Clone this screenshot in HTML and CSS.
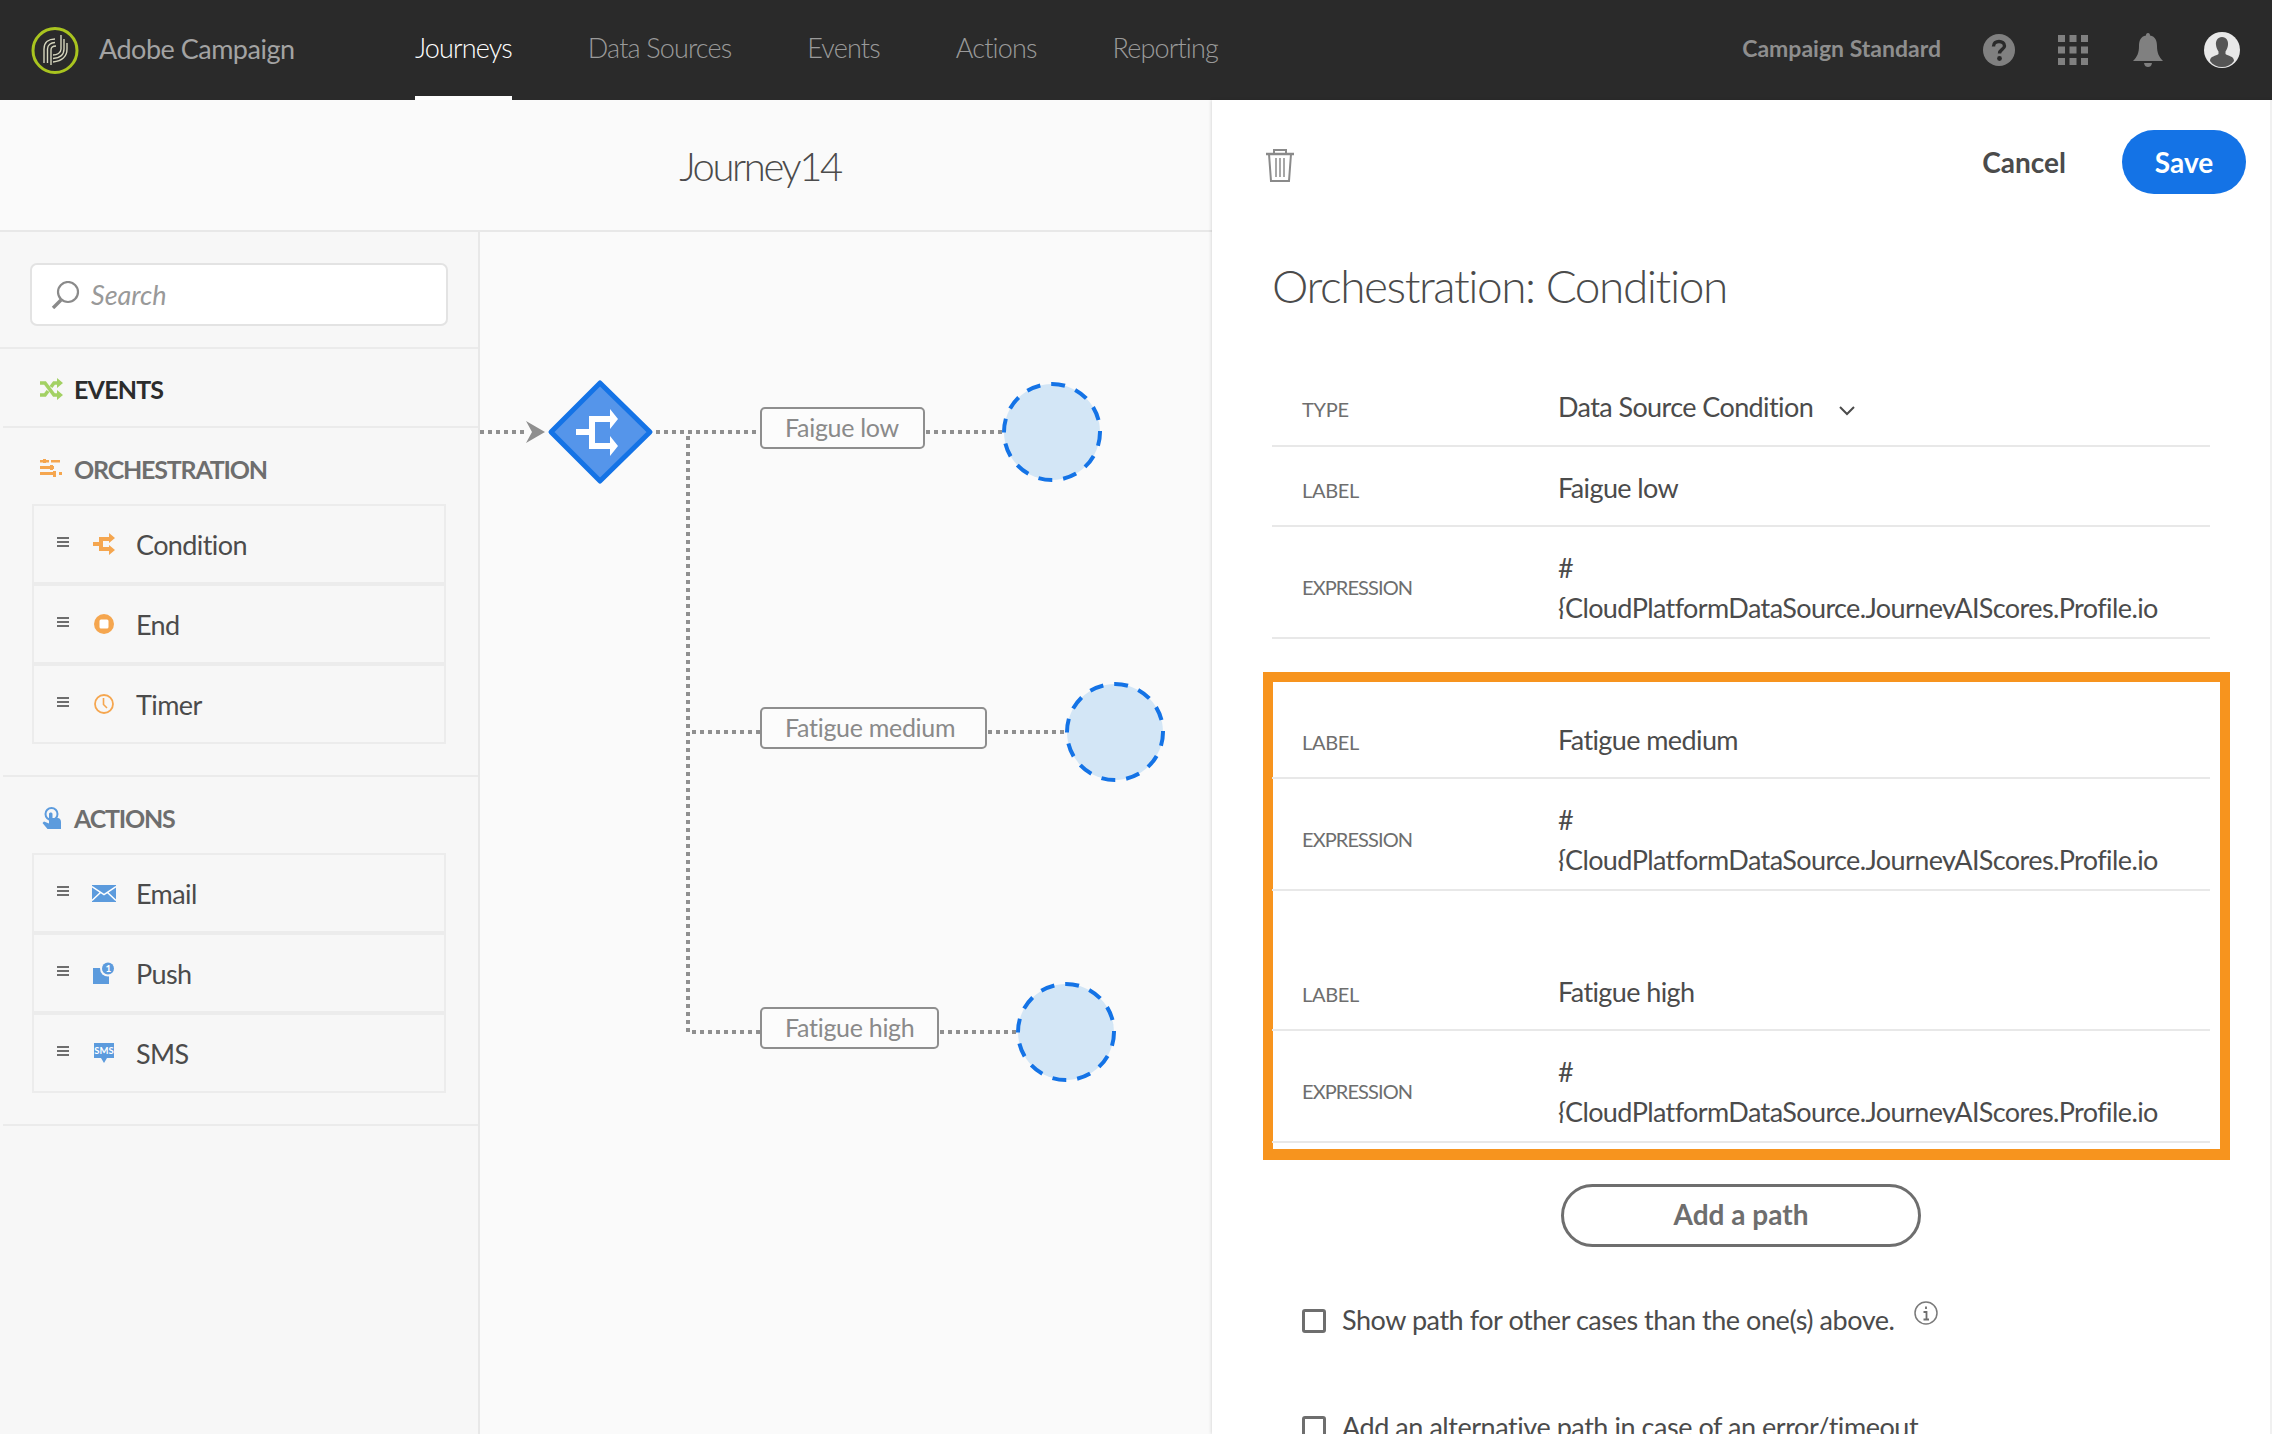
FILE: index.html
```html
<!DOCTYPE html>
<html lang="en">
<head>
  <meta charset="UTF-8">
  <title>Adobe Campaign - Journey14</title>
  <link rel="stylesheet" href="styles.css">
</head>
<body>
<svg class="defs" width="0" height="0">
  <symbol id="drag" viewBox="0 0 12 10"><path d="M0 1h12M0 5h12M0 9h12" stroke="#6e6e6e" stroke-width="2"/></symbol>
</svg>

<header class="topbar">
  <div class="brand">
    <svg class="logo" width="50" height="50" viewBox="30 22 50 50" fill="none">
      <circle cx="56" cy="47.5" r="22" stroke="#a9c41f" stroke-width="3"/>
      <path d="M45 60V46C45 39 50 36 56 36M48.5 60V46C48.5 42 52 39.5 56 39.5M52 62V47C52 44 54 43 57 43M62 32V46C62 50 58 52 54 52M65 36V46C65 52 60 55 54 55.5M68 40V46C68 54 62 58 54 59" stroke="#d5d5bd" stroke-width="1.4"/>
    </svg>
    <span class="brand-name">Adobe Campaign</span>
  </div>
  <nav class="nav">
    <a class="nav-item active">Journeys</a>
    <a class="nav-item">Data Sources</a>
    <a class="nav-item">Events</a>
    <a class="nav-item">Actions</a>
    <a class="nav-item">Reporting</a>
  </nav>
  <div class="top-right">
    <span class="org">Campaign Standard</span>
    <svg class="top-icon help" width="32" height="32" viewBox="0 0 32 32">
      <circle cx="16" cy="16" r="16" fill="#808080"/>
      <path d="M10.5 12.5C10.5 9 13 7.5 16 7.5S21.5 9.2 21.5 12C21.5 15.5 16.5 15.5 16.5 19.5" fill="none" stroke="#2a2a2a" stroke-width="3.4"/>
      <circle cx="16.5" cy="24.5" r="2.4" fill="#2a2a2a"/>
    </svg>
    <svg class="top-icon apps" width="30" height="30" viewBox="0 0 30 30" fill="#808080">
      <rect width="7" height="7"/><rect x="11.5" width="7" height="7"/><rect x="23" width="7" height="7"/>
      <rect y="11.5" width="7" height="7"/><rect x="11.5" y="11.5" width="7" height="7"/><rect x="23" y="11.5" width="7" height="7"/>
      <rect y="23" width="7" height="7"/><rect x="11.5" y="23" width="7" height="7"/><rect x="23" y="23" width="7" height="7"/>
    </svg>
    <svg class="top-icon" width="30" height="34" viewBox="0 0 30 34" fill="#808080">
      <path d="M15 0C16.5 0 17 1 17 2.500C22.500 3.500 24 8 24 13C24 20 26 24 30 28H0C4 24 6 20 6 13C6 8 7.500 3.500 13 2.500C13 1 13.500 0 15 0Z"/>
      <path d="M11 30H19C18.500 33 16.800 34 15 34S11.500 33 11 30Z"/>
    </svg>
    <svg class="top-icon" width="36" height="36" viewBox="0 0 36 36">
      <circle cx="18" cy="18" r="18" fill="#e8e8e8"/>
      <path d="M18 5C22.500 5 24.500 9 24 13C23.700 16 22.500 18 21.500 19.500V22C24 24 30 24 30 29C27 33 23 35 18 35S9 33 6 29C6 24 12 24 14.500 22V19.500C13.500 18 12.300 16 12 13C11.500 9 13.500 5 18 5Z" fill="#555"/>
    </svg>
  </div>
</header>

<main class="workspace">
  <section class="editor">
    <div class="journey-title">Journey14</div>
    <div class="editor-body">
      <aside class="sidebar">
        <div class="side-search">
          <div class="search-box">
            <svg width="29" height="28" viewBox="0 0 29 28" fill="none" stroke="#8a8a8a">
              <circle cx="17" cy="11" r="10" stroke-width="2.200"/>
              <path d="M10 19L2 27" stroke-width="3.400"/>
            </svg>
            <span>Search</span>
          </div>
        </div>

        <div class="side-section first">
          <div class="side-head dark">
            <svg width="23" height="22" viewBox="0 0 23 22" fill="none">
              <path d="M0 5H5L14 17H18M0 17H5L8 13M11 9L14 5H18" stroke="#a3d164" stroke-width="3.600"/>
              <path d="M17 0L23 5L17 10ZM17 12L23 17L17 22Z" fill="#a3d164"/>
            </svg>
            EVENTS
          </div>
        </div>

        <div class="side-section">
          <div class="side-head">
            <svg width="23" height="20" viewBox="0 0 23 20" fill="#f5a64f">
              <rect x="3" width="3" height="4"/><rect x="0" y="1" width="9" height="2.500"/><rect x="11" y="1" width="9" height="2.500"/>
              <rect x="0" y="7" width="14" height="3"/><rect x="10" y="6" width="3" height="5"/>
              <rect x="0" y="13" width="13" height="3"/><rect x="13" y="12" width="3" height="6"/><rect x="19" y="13" width="3" height="3"/>
            </svg>
            ORCHESTRATION
          </div>
          <div class="item">
            <svg class="drag" width="12" height="10"><use href="#drag"/></svg>
            <span class="item-icon">
              <svg width="24" height="24" viewBox="0 0 24 24" fill="#f5a64f">
                <rect x="1" y="10" width="8" height="4"/>
                <path d="M7 5H17V1L23 6L17 11V9H11V15H17V13L23 18L17 23V19H7Z"/>
              </svg>
            </span>
            <span class="item-text">Condition</span>
          </div>
          <div class="item">
            <svg class="drag" width="12" height="10"><use href="#drag"/></svg>
            <span class="item-icon">
              <svg width="20" height="20" viewBox="0 0 20 20">
                <circle cx="10" cy="10" r="10" fill="#f5a64f"/>
                <rect x="5.500" y="5.500" width="9" height="9" rx="1.500" fill="#fff"/>
              </svg>
            </span>
            <span class="item-text">End</span>
          </div>
          <div class="item">
            <svg class="drag" width="12" height="10"><use href="#drag"/></svg>
            <span class="item-icon">
              <svg width="20" height="20" viewBox="0 0 20 20" fill="none" stroke="#f5a64f">
                <circle cx="10" cy="10" r="9" stroke-width="1.800"/>
                <path d="M9.500 4V10.500L13 14" stroke-width="1.600"/>
              </svg>
            </span>
            <span class="item-text">Timer</span>
          </div>
        </div>

        <div class="side-section">
          <div class="side-head">
            <svg width="23" height="22" viewBox="0 0 20 22">
              <circle cx="10" cy="7" r="6" fill="none" stroke="#5c9bdd" stroke-width="2"/>
              <path d="M7.500 7C7.500 5 11 5 11 7V11H16C18.500 11 19.500 13 19.500 15V22H6L1 16L2.500 14.500L7.500 16.500Z" fill="#5c9bdd"/>
            </svg>
            ACTIONS
          </div>
          <div class="item">
            <svg class="drag" width="12" height="10"><use href="#drag"/></svg>
            <span class="item-icon">
              <svg width="24" height="17" viewBox="0 0 24 17">
                <rect width="24" height="17" fill="#5c9bdd"/>
                <path d="M0 1.500L12 9.500L24 1.500M0 15.500L8.500 7.500M24 15.500L15.500 7.500" fill="none" stroke="#fff" stroke-width="1.500"/>
              </svg>
            </span>
            <span class="item-text">Email</span>
          </div>
          <div class="item">
            <svg class="drag" width="12" height="10"><use href="#drag"/></svg>
            <span class="item-icon">
              <svg width="24" height="22" viewBox="0 0 24 22">
                <rect x="1" y="6" width="16" height="16" fill="#5c9bdd"/>
                <circle cx="16" cy="6.500" r="8" fill="#f7f7f7"/>
                <circle cx="16" cy="6.500" r="6" fill="#5c9bdd"/>
                <text x="16" y="10" class="tiny-num">1</text>
              </svg>
            </span>
            <span class="item-text">Push</span>
          </div>
          <div class="item">
            <svg class="drag" width="12" height="10"><use href="#drag"/></svg>
            <span class="item-icon">
              <svg width="20" height="20" viewBox="0 0 20 20">
                <path d="M0 0H20V15H13L10 20L7 15H0Z" fill="#5c9bdd"/>
                <text x="10" y="11" class="tiny-sms">SMS</text>
              </svg>
            </span>
            <span class="item-text">SMS</span>
          </div>
        </div>
      </aside>

      <div class="canvas">
        <svg class="wires" width="732" height="1202" viewBox="0 0 732 1202" fill="none">
          <g stroke="#8f8f8f" stroke-width="4" stroke-dasharray="4 4">
            <path d="M0 200H47"/>
            <path d="M176 200H281"/>
            <path d="M208 204V800"/>
            <path d="M212 500H281"/>
            <path d="M212 800H281"/>
            <path d="M446 200H523"/>
            <path d="M508 500H586"/>
            <path d="M460 800H537"/>
          </g>
          <path d="M46 189L65 200L46 211L52 200Z" fill="#8f8f8f"/>
          <path d="M120 151L170 200L120 249L71 200Z" fill="#5595ea" stroke="#1473e6" stroke-width="5" stroke-linejoin="round"/>
          <path d="M96 200H112M112 187V214M109 187H131M109 214H131" stroke="#fff" stroke-width="6"/>
          <path d="M130 177L138 187L130 197ZM130 204L138 214L130 224Z" fill="#fff"/>
          <g fill="#d3e6f6" stroke="#1473e6" stroke-width="4" stroke-dasharray="14 11">
            <circle cx="572" cy="200" r="48"/>
            <circle cx="635" cy="500" r="48"/>
            <circle cx="586" cy="800" r="48"/>
          </g>
        </svg>
        <div class="path-label low">Faigue low</div>
        <div class="path-label medium">Fatigue medium</div>
        <div class="path-label high">Fatigue high</div>
      </div>
    </div>
  </section>

  <section class="panel">
    <div class="panel-actions">
      <svg class="trash" width="30" height="34" viewBox="0 0 30 34" fill="none" stroke="#8a8a8a">
        <path d="M1 6H29" stroke-width="2.500"/>
        <path d="M9 6V2H21V6" stroke-width="2"/>
        <path d="M4 6L6 33H24L26 6" stroke-width="2"/>
        <path d="M11 10V29M15 10V29M19 10V29" stroke-width="1.500"/>
      </svg>
      <span class="cancel">Cancel</span>
      <button class="save">Save</button>
    </div>

    <h1 class="panel-title">Orchestration: Condition</h1>

    <div class="row type-row">
      <div class="row-label">TYPE</div>
      <div class="row-value">Data Source Condition
        <svg class="chevron" width="16" height="10" viewBox="0 0 16 10" fill="none"><path d="M1 1L8 8L15 1" stroke="#4b4b4b" stroke-width="2"/></svg>
      </div>
    </div>
    <div class="row">
      <div class="row-label">LABEL</div>
      <div class="row-value">Faigue low</div>
    </div>
    <div class="row expr">
      <div class="row-label">EXPRESSION</div>
      <div class="row-value">#<br>{CloudPlatformDataSource.JourneyAIScores.Profile.io</div>
    </div>

    <div class="highlight">
      <div class="row first-label">
        <div class="row-label">LABEL</div>
        <div class="row-value">Fatigue medium</div>
      </div>
      <div class="row expr">
        <div class="row-label">EXPRESSION</div>
        <div class="row-value">#<br>{CloudPlatformDataSource.JourneyAIScores.Profile.io</div>
      </div>
      <div class="row second-label">
        <div class="row-label">LABEL</div>
        <div class="row-value">Fatigue high</div>
      </div>
      <div class="row expr">
        <div class="row-label">EXPRESSION</div>
        <div class="row-value">#<br>{CloudPlatformDataSource.JourneyAIScores.Profile.io</div>
      </div>
    </div>

    <button class="add-path"><span>Add a path</span></button>

    <div class="check-row">
      <span class="check"></span>
      <span class="check-text">Show path for other cases than the one(s) above.</span>
      <svg class="info" width="24" height="26" viewBox="0 0 24 26" fill="none">
        <circle cx="12" cy="13" r="11" stroke="#7a7a7a" stroke-width="1.500"/>
        <path d="M12 6.500V9M9.500 12H12.500V19M9.500 19.500H15" stroke="#6e6e6e" stroke-width="1.800"/>
      </svg>
    </div>
    <div class="check-row second">
      <span class="check"></span>
      <span class="check-text">Add an alternative path in case of an error/timeout</span>
    </div>
  </section>
</main>
</body>
</html>
```

FILE: styles.css
```css
* {
  box-sizing: border-box;
}
html, body {
  margin: 0;
  height: 100%;
  overflow: hidden;
}
body {
  font-family: "Lato", "Open Sans", sans-serif;
  color: #4b4b4b;
  background: #fff;
  display: flex;
  flex-direction: column;
}
.defs {
  position: absolute;
}

/* top bar */
.topbar {
  height: 100px;
  flex: none;
  background: #2a2a2a;
  display: flex;
  align-items: stretch;
  padding-left: 29px;
}
.brand {
  display: flex;
  align-items: center;
  width: 386px;
}
.logo {
  margin-right: 20px;
}
.brand-name {
  font-size: 27px;
  letter-spacing: -.5px;
  color: #a3a3a3;
  margin-top: -4px;
}
.nav {
  display: flex;
  gap: 76px;
}
.nav-item {
  font-size: 27px;
  font-weight: 300;
  letter-spacing: -.85px;
  color: #9a9a9a;
  display: flex;
  align-items: center;
  border-bottom: 4px solid transparent;
  padding-bottom: 2px;
}
.nav-item.active {
  color: #fff;
  border-bottom-color: #fff;
}
.top-right {
  margin-left: auto;
  display: flex;
  align-items: center;
  padding-right: 32px;
}
.org {
  font-size: 23px;
  font-weight: 700;
  color: #8e8e8e;
  margin-right: 42px;
  margin-top: -4px;
}
.top-icon {
  margin-right: 41px;
}
.top-icon.help {
  margin-right: 43px;
}
.top-icon.apps {
  margin-right: 45px;
}
.top-icon:last-child {
  margin-right: 0;
}

/* left editor */
.workspace {
  flex: 1;
  display: flex;
  min-height: 0;
}
.editor {
  width: 1212px;
  flex: none;
  display: flex;
  flex-direction: column;
  background: #fafafa;
}
.journey-title {
  height: 132px;
  flex: none;
  border-bottom: 2px solid #e8e8e8;
  padding: 2px 0 0 308px;
  display: flex;
  align-items: center;
  justify-content: center;
  font-size: 40px;
  font-weight: 300;
  letter-spacing: -2.4px;
  color: #4b4b4b;
}
.editor-body {
  flex: 1;
  display: flex;
  min-height: 0;
}

/* palette */
.sidebar {
  width: 480px;
  flex: none;
  background: #f7f7f7;
  border-right: 2px solid #e8e8e8;
}
.side-search {
  padding: 31px 30px 21px 30px;
  border-bottom: 2px solid #ebebeb;
}
.search-box {
  height: 63px;
  background: #fff;
  border: 2px solid #e3e3e3;
  border-radius: 7px;
  display: flex;
  align-items: center;
  padding-left: 19px;
  gap: 11px;
  font-size: 27px;
  font-style: italic;
  color: #999;
}
.side-section {
  padding: 24px 32px 31px 0;
  border-bottom: 2px solid #ebebeb;
  margin-left: 3px;
}
.side-section.first {
  padding: 23px 32px 20px 0;
}
.side-head {
  height: 34px;
  display: flex;
  align-items: center;
  gap: 11px;
  padding-left: 37px;
  font-size: 25px;
  font-weight: 700;
  letter-spacing: -1.2px;
  color: #6e6e6e;
  margin-bottom: 18px;
}
.side-section.first .side-head {
  margin-bottom: 0;
  letter-spacing: -.8px;
}
.side-head.dark {
  color: #2c2c2c;
}
.item {
  height: 80px;
  margin-left: 29px;
  border: 2px solid #ececec;
  display: flex;
  align-items: center;
  padding-left: 23px;
  font-size: 27px;
  letter-spacing: -.6px;
  color: #4b4b4b;
}
.drag {
  flex: none;
  margin-top: -4px;
}
.item-icon {
  width: 32px;
  margin-left: 19px;
  margin-right: 16px;
  display: flex;
  justify-content: center;
}
.tiny-num {
  font-size: 10px;
  font-weight: 700;
  fill: #fff;
  text-anchor: middle;
}
.tiny-sms {
  font-size: 9.500px;
  font-weight: 700;
  letter-spacing: 0;
  fill: #fff;
  text-anchor: middle;
}

/* journey canvas */
.canvas {
  flex: 1;
  position: relative;
  overflow: hidden;
}
.wires {
  position: absolute;
  left: 0;
  top: 0;
}
.path-label {
  position: absolute;
  height: 42px;
  left: 280px;
  border: 2px solid #8e8e8e;
  border-radius: 5px;
  background: #fcfcfc;
  padding-left: 23px;
  font-size: 25px;
  letter-spacing: -.3px;
  line-height: 36px;
  color: #8a8a8a;
  white-space: nowrap;
}
.path-label.low {
  top: 175px;
  width: 165px;
}
.path-label.medium {
  top: 475px;
  width: 227px;
}
.path-label.high {
  top: 775px;
  width: 179px;
}

/* right panel */
.panel {
  flex: 1;
  position: relative;
  background: #fff;
  box-shadow: -1px 0 3px rgba(0, 0, 0, .12);
  border-right: 2px solid #f0f0f0;
  padding: 30px 60px 0 60px;
}
.panel-actions {
  height: 64px;
  display: flex;
  align-items: center;
}
.trash {
  margin-left: -7px;
  margin-top: 6px;
}
.cancel {
  margin-left: auto;
  font-size: 28px;
  font-weight: 700;
  color: #4b4b4b;
  margin-right: 56px;
}
.save {
  width: 124px;
  height: 64px;
  margin-right: -36px;
  border: none;
  border-radius: 32px;
  background: #1473e6;
  color: #fff;
  font: 700 28px "Lato", sans-serif;
}
.panel-title {
  margin: 64px 0 0;
  height: 58px;
  font-size: 46px;
  line-height: 56px;
  font-weight: 300;
  letter-spacing: -1.45px;
  color: #4b4b4b;
}

/* form rows */
.row {
  height: 80px;
  display: grid;
  grid-template-columns: 286px 1fr;
  align-items: baseline;
  align-content: end;
  border-bottom: 2px solid #e8e8e8;
  padding-bottom: 17px;
}
.row-label {
  padding-left: 30px;
  font-size: 20px;
  letter-spacing: -.3px;
  color: #6e6e6e;
}
.row-value {
  font-size: 27px;
  line-height: 40px;
  letter-spacing: -.6px;
  color: #4b4b4b;
}
.row.type-row {
  height: 131px;
  padding-bottom: 18px;
}
.chevron {
  margin-left: 20px;
  vertical-align: 1px;
}
.row.expr {
  height: 112px;
  padding: 21px 0 18px;
  align-items: center;
  align-content: stretch;
}
.expr .row-label {
  margin-top: 6px;
  letter-spacing: -.9px;
}
.expr .row-value {
  height: 71px;
  overflow: hidden;
}
.highlight {
  margin: 33px -20px 0 -9px;
  border: 10px solid #f7941e;
  border-bottom-width: 11px;
  padding: 0 10px 6px 0;
}
.highlight .row {
  margin-left: -1px;
}
.row.first-label {
  height: 97px;
}
.row.second-label {
  height: 140px;
}

/* bottom controls */
.add-path {
  display: block;
  width: 360px;
  height: 63px;
  margin: 24px auto 0;
  padding: 0 0 3px;
  border: 3px solid #6e6e6e;
  border-radius: 32px;
  background: #fff;
  color: #6e6e6e;
  font: 700 28px "Lato", sans-serif;
}
.check-row {
  margin: 59px 0 0 30px;
  height: 30px;
  display: flex;
  align-items: center;
  font-size: 27px;
  letter-spacing: -.45px;
  color: #4b4b4b;
  white-space: nowrap;
}
.check-row.second {
  margin-top: 77px;
}
.check-text {
  margin-top: -3px;
}
.check {
  width: 24px;
  height: 24px;
  flex: none;
  border: 3px solid #6e6e6e;
  border-radius: 3px;
  margin-right: 16px;
}
.info {
  margin: -16px 0 0 20px;
}
```
